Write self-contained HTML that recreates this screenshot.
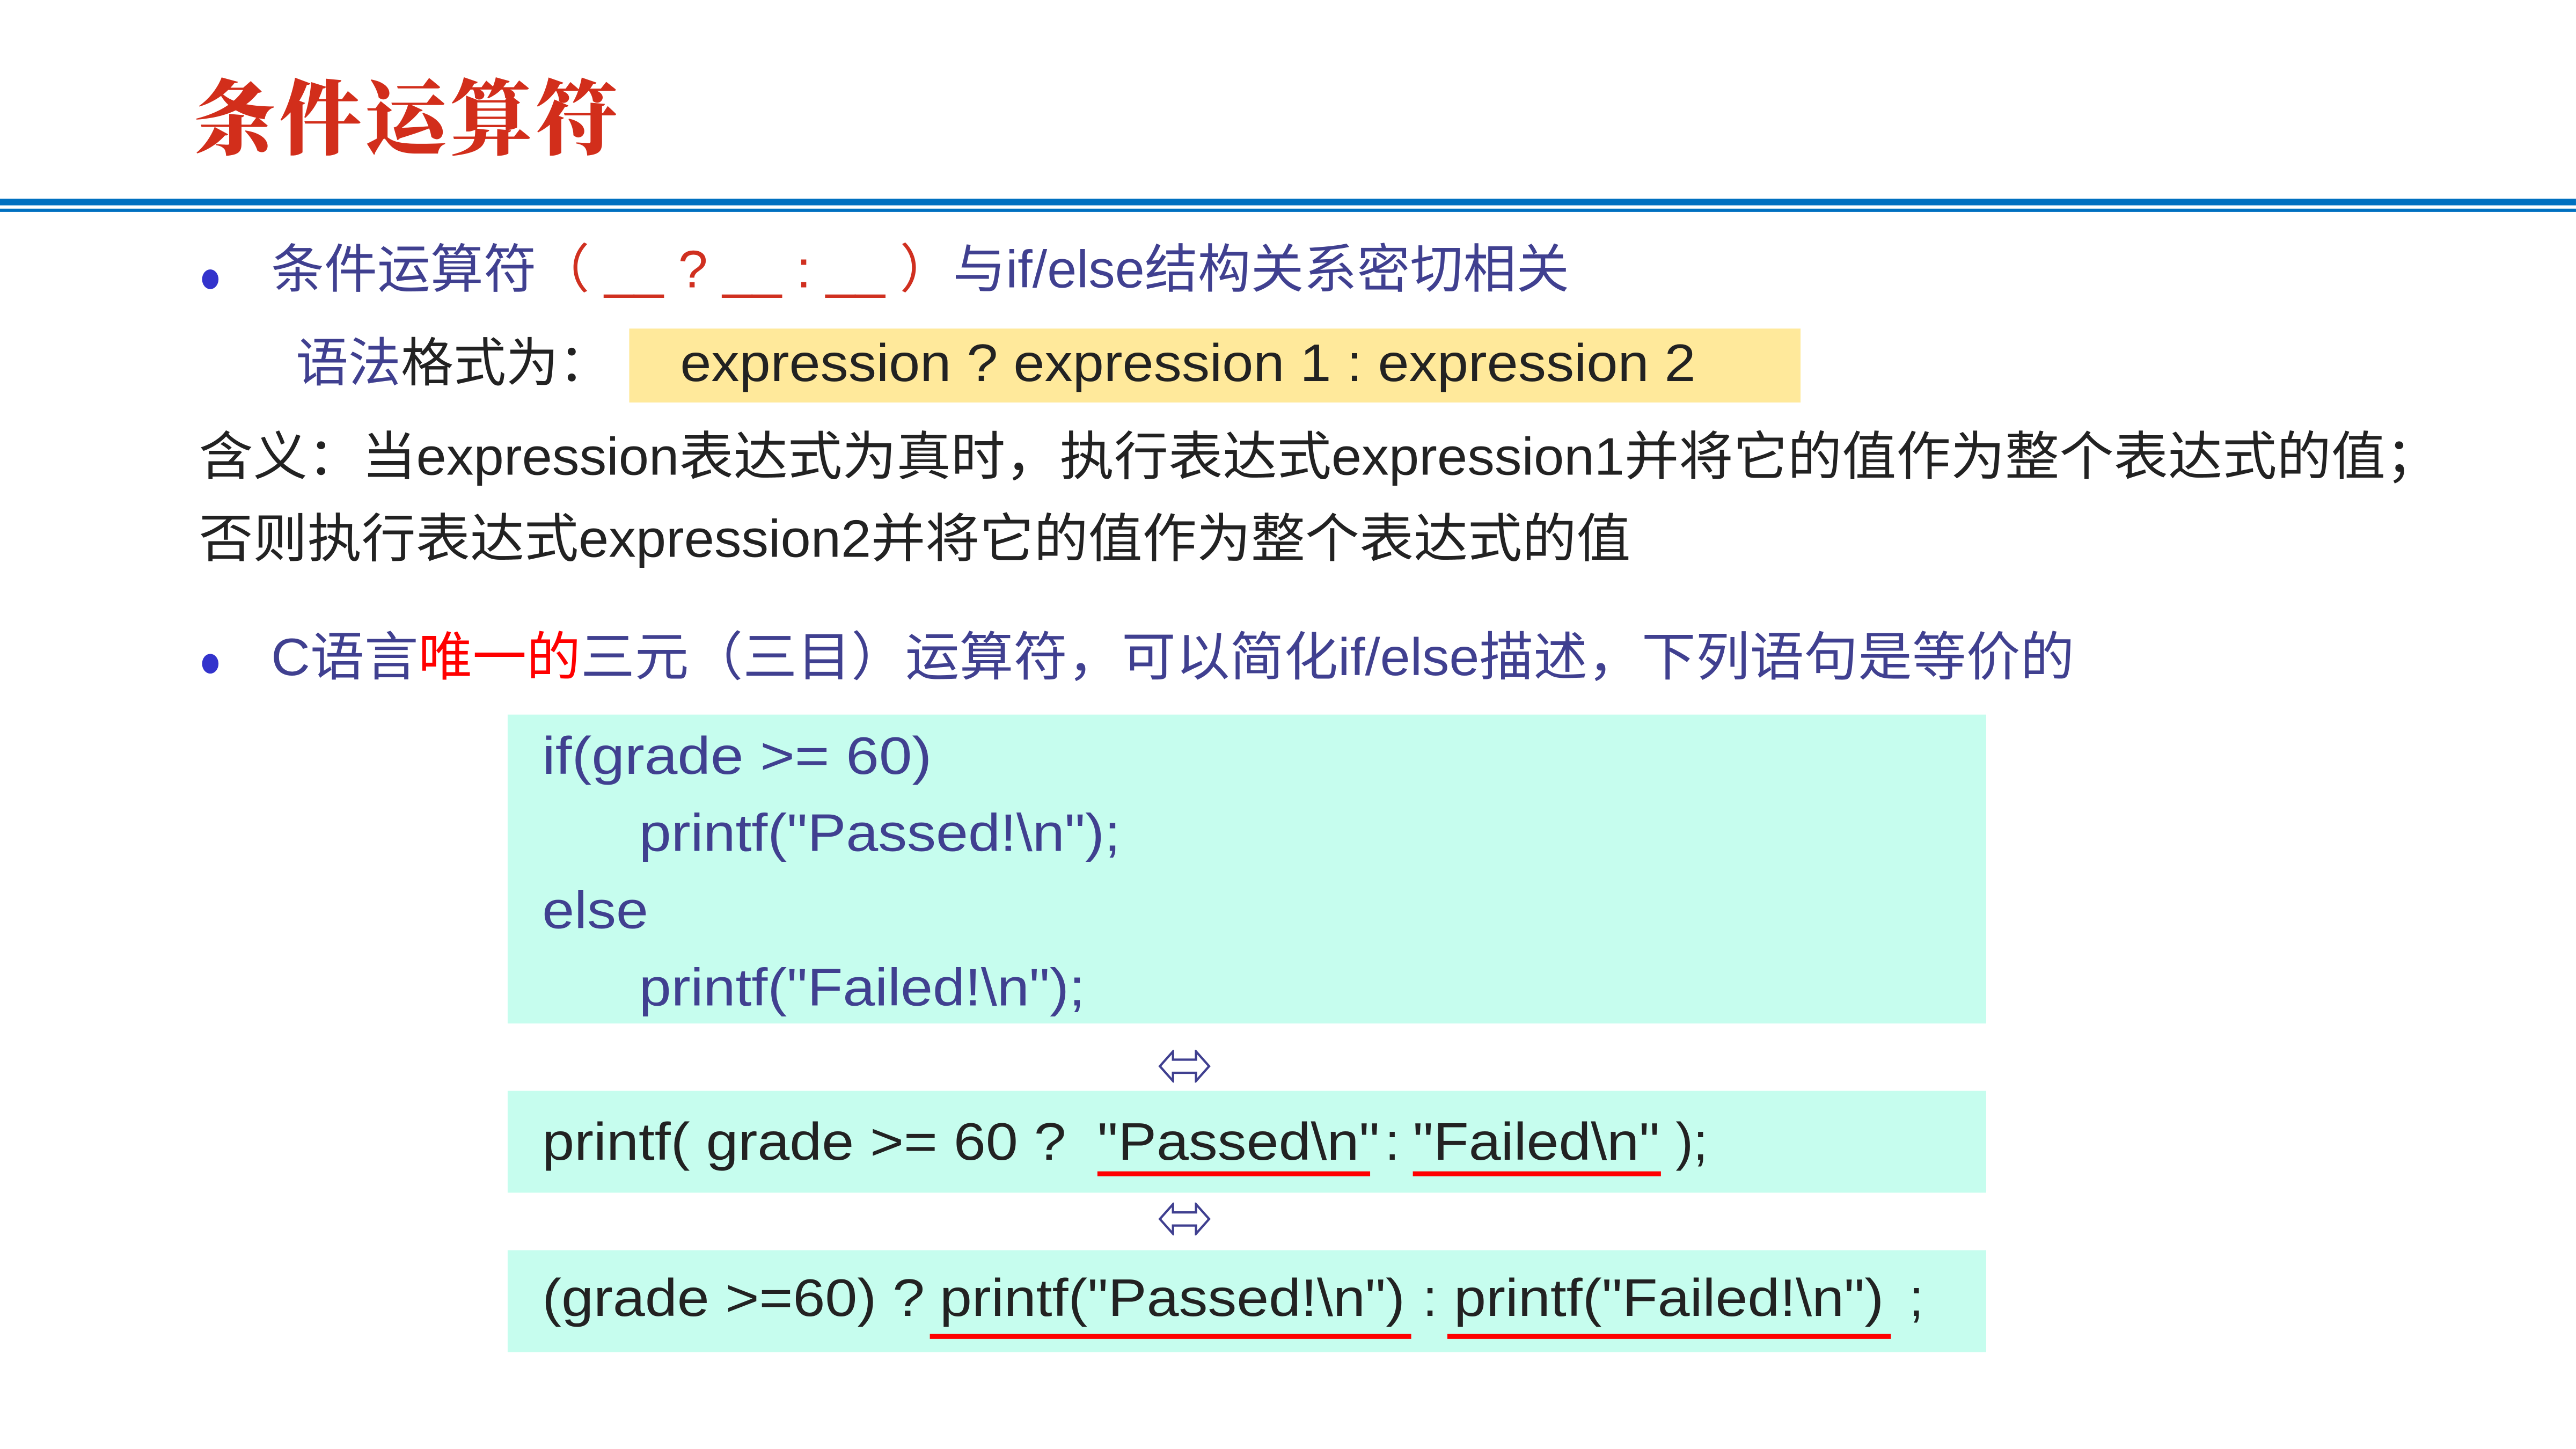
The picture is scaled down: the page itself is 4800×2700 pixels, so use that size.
<!DOCTYPE html>
<html><head><meta charset="utf-8"><style>
html,body{margin:0;padding:0;background:#fff;}
body{width:4800px;height:2700px;overflow:hidden;position:relative;}
#s{position:absolute;left:0;top:0;width:1568px;height:882px;transform:scale(3.0612);transform-origin:0 0;font-family:"Liberation Sans","Noto Sans CJK SC",sans-serif;}
.a{position:absolute;white-space:nowrap;line-height:1;transform-origin:0 50%;}
.b{color:#404090}.r{color:#d03020}.rr{color:#ff0000}.d{color:#222}
.box{position:absolute;background:#c6fdee;}
.u{position:absolute;height:3px;background:#ff0000;}
.eq{position:absolute;}
.x{transform:scaleX(1.1);}
</style></head><body><div id="s">
<div class="a" style="left:118px;top:44px;font-size:50px;color:#d22e1b;font-family:'Noto Serif CJK SC',serif;font-weight:900;letter-spacing:2px;">条件运算符</div>
<div style="position:absolute;left:0;top:121px;width:1568px;height:4px;background:#0070c0"></div>
<div style="position:absolute;left:0;top:127px;width:1568px;height:2px;background:#0070c0"></div>

<div style="position:absolute;left:123px;top:164px;width:10px;height:12px;border-radius:50%;background:#3333cc"></div>
<div class="a b" style="left:165px;top:148px;font-size:32px;transform:scaleX(1.01)">条件运算符<span class="r">（ __ ? __ : __ ）</span>与if/else结构关系密切相关</div>

<div class="a" style="left:180px;top:205px;font-size:32px;"><span class="b">语法</span><span class="d">格式为：</span></div>
<div style="position:absolute;left:383px;top:200px;width:713px;height:45px;background:#ffe99b"></div>
<div class="a d" style="left:414px;top:205px;font-size:32px;transform:scaleX(1.066)">expression ? expression 1 : expression 2</div>

<div class="a d" style="left:121px;top:262px;font-size:32px;transform:scaleX(1.034)">含义：当expression表达式为真时，执行表达式expression1并将它的值作为整个表达式的值；</div>
<div class="a d" style="left:121px;top:312px;font-size:32px;transform:scaleX(1.032)">否则执行表达式expression2并将它的值作为整个表达式的值</div>

<div style="position:absolute;left:123px;top:398px;width:10px;height:12px;border-radius:50%;background:#3333cc"></div>
<div class="a b" style="left:165px;top:384px;font-size:32px;transform:scaleX(1.029)">C语言<span class="rr">唯一的</span>三元（三目）运算符，可以简化if/else描述，下列语句是等价的</div>

<div class="box" style="left:309px;top:435px;width:900px;height:188px"></div>
<div class="a b" style="left:330px;top:444px;font-size:32px;transform:scaleX(1.13)">if(grade &gt;= 60)</div>
<div class="a b x" style="left:389px;top:491px;font-size:32px;">printf("Passed!\n");</div>
<div class="a b" style="left:330px;top:538px;font-size:32px;transform:scaleX(1.1)">else</div>
<div class="a b x" style="left:389px;top:585px;font-size:32px;">printf("Failed!\n");</div>

<svg class="eq" style="left:705px;top:639px" width="32" height="20" viewBox="0 0 32 20"><path d="M1 10 L9 1 L9 6 L23 6 L23 1 L31 10 L23 19 L23 14 L9 14 L9 19 Z" fill="none" stroke="#404090" stroke-width="1.4"/></svg>

<div class="box" style="left:309px;top:664px;width:900px;height:62px"></div>
<div class="a d x" style="left:330px;top:679px;font-size:32px;">printf( grade &gt;= 60 ?</div>
<div class="a d x" style="left:668px;top:679px;font-size:32px;">"Passed\n"</div>
<div class="a d" style="left:843px;top:679px;font-size:32px;">:</div>
<div class="a d x" style="left:860px;top:679px;font-size:32px;">"Failed\n"</div>
<div class="a d" style="left:1020px;top:679px;font-size:32px;">);</div>
<div class="u" style="left:668px;top:713px;width:166px"></div>
<div class="u" style="left:860px;top:713px;width:151px"></div>

<svg class="eq" style="left:705px;top:732px" width="32" height="20" viewBox="0 0 32 20"><path d="M1 10 L9 1 L9 6 L23 6 L23 1 L31 10 L23 19 L23 14 L9 14 L9 19 Z" fill="none" stroke="#404090" stroke-width="1.4"/></svg>

<div class="box" style="left:309px;top:761px;width:900px;height:62px"></div>
<div class="a d x" style="left:330px;top:774px;font-size:32px;">(grade &gt;=60) ?</div>
<div class="a d x" style="left:572px;top:774px;font-size:32px;">printf("Passed!\n")</div>
<div class="a d" style="left:866px;top:774px;font-size:32px;">:</div>
<div class="a d x" style="left:885px;top:774px;font-size:32px;">printf("Failed!\n")</div>
<div class="a d" style="left:1162px;top:774px;font-size:32px;">;</div>
<div class="u" style="left:566px;top:812px;width:293px"></div>
<div class="u" style="left:881px;top:812px;width:270px"></div>
</div></body></html>
